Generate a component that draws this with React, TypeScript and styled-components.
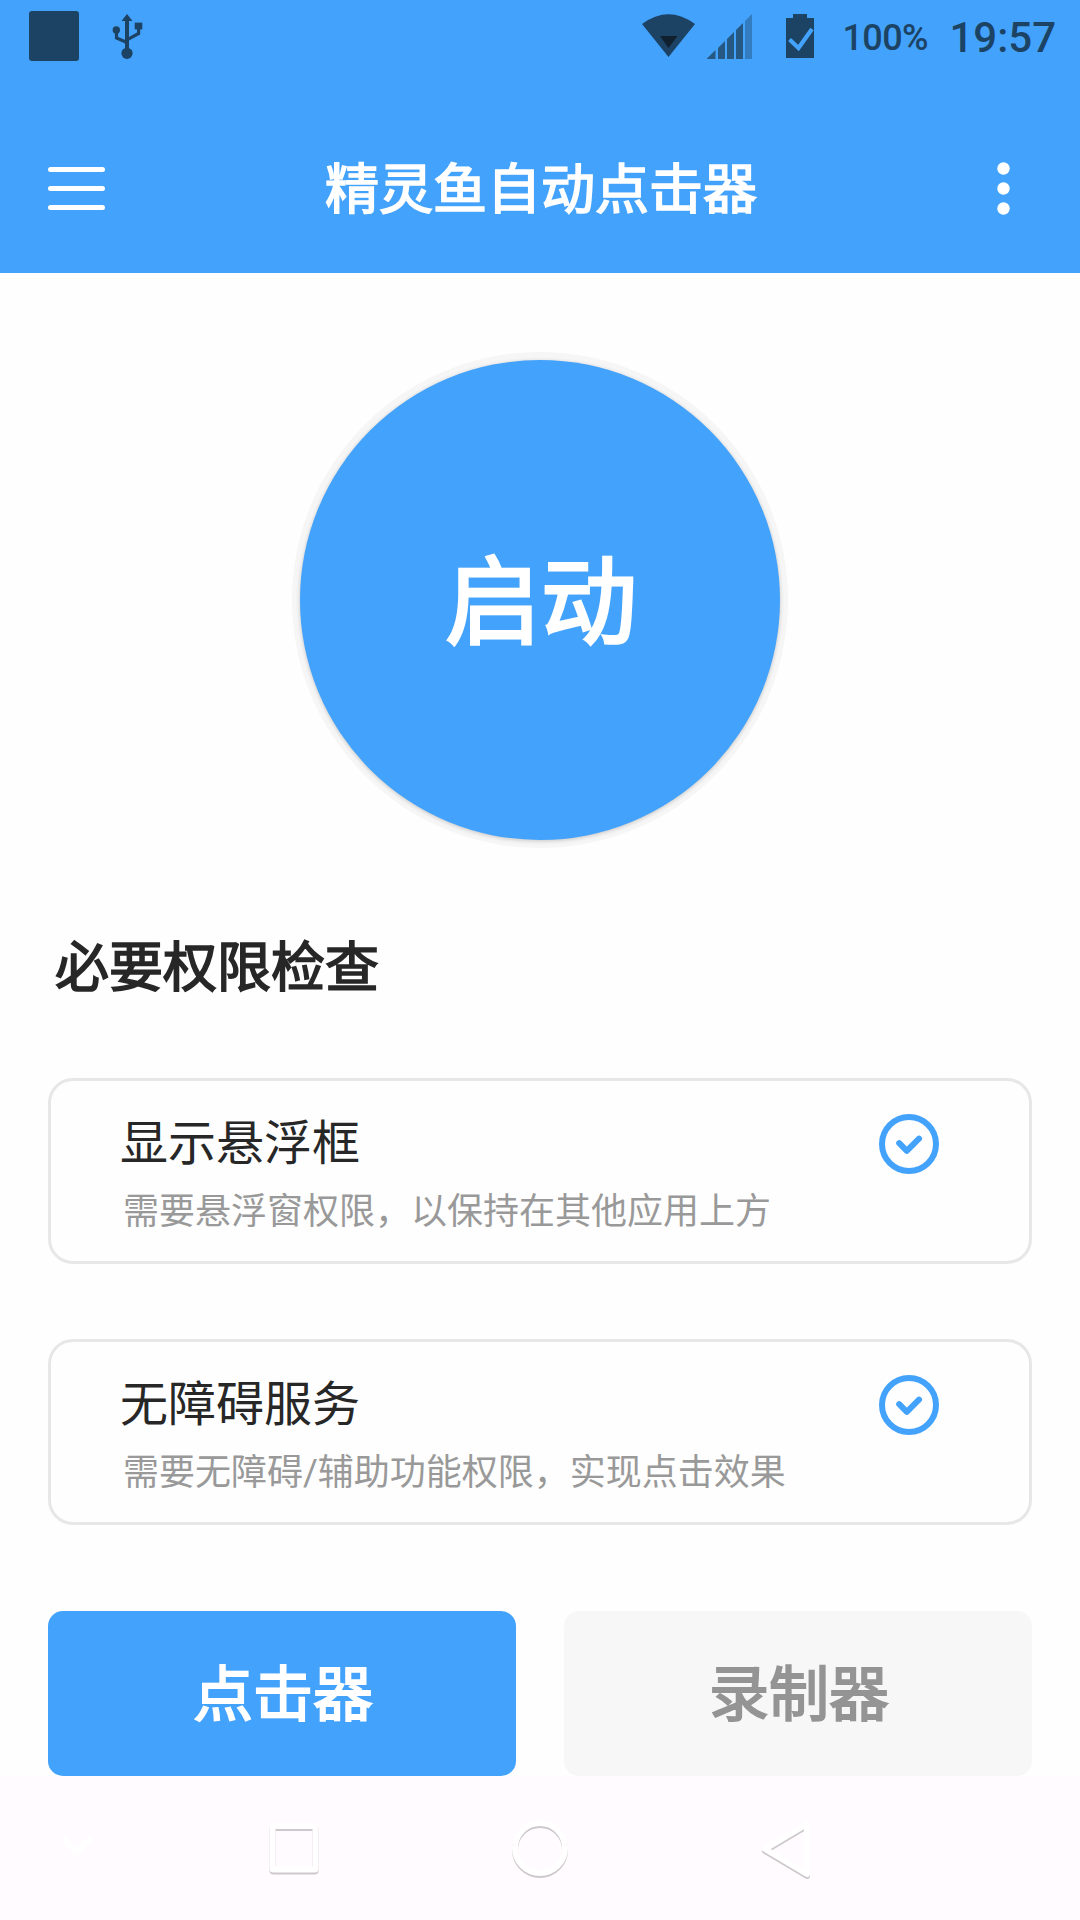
import React from 'react';
import styled, { createGlobalStyle } from 'styled-components';

const BLUE = '#43a2fb';
const STATUS = '#1c4264';
const CJK = '"Noto Sans CJK SC", "Noto Sans", sans-serif';

const GlobalStyle = createGlobalStyle`
  *, *::before, *::after { box-sizing: border-box; }
  body { margin: 0; background: #fefefe; }
`;

const Screen = styled.div`
  display: flex;
  flex-direction: column;
  width: 1080px;
  height: 1920px;
  overflow: hidden;
  background: #fefefe;
  font-family: ${CJK};
`;

/* Regular-weight glyphs thickened by an outline of 1/32 of the font size.
   The padding centres the ideographs optically inside their parent. */
const FauxBold = styled.span<{ $size: number }>`
  display: block;
  padding: 0 0 0.11em 2px;
  font-size: ${(p) => p.$size}px;
  line-height: ${(p) => p.$size * 1.25}px;
  font-weight: 400;
  white-space: nowrap;
  -webkit-text-stroke: ${(p) => p.$size / 32}px currentColor;
`;

const AppTitle = styled(FauxBold)`
  padding-bottom: 4px;
`;

const ModeLabel = styled(FauxBold)`
  padding-bottom: 8px;
`;

const StatusBar = styled.header`
  display: flex;
  align-items: center;
  justify-content: space-between;
  height: 72px;
  padding: 0 24px 0 29px;
  background: ${BLUE};
  color: ${STATUS};
  font-family: Roboto, sans-serif;
  font-weight: 500;
`;

const StatusGroup = styled.div`
  display: flex;
  align-items: center;
  height: 72px;
`;

const Notification = styled.div`
  width: 50px;
  height: 50px;
  margin-right: 26px;
  border-radius: 3px;
  background: ${STATUS};
`;

const Glyph = styled.svg`
  display: block;
  flex: none;
`;

const Signals = styled.div`
  display: flex;
  align-items: center;
  gap: 9px;
  margin-right: 34px;
`;

const BatteryLevel = styled.span`
  width: 84px;
  margin-left: 28px;
  padding-top: 4px;
  font-size: 36px;
  line-height: 72px;
  letter-spacing: -0.6px;
`;

const Clock = styled.span`
  margin-left: 23px;
  padding-top: 4px;
  font-size: 42px;
  line-height: 72px;
`;

const TitleBar = styled.div`
  display: flex;
  align-items: center;
  justify-content: space-between;
  height: 201px;
  padding: 31px 48px 0;
  background: ${BLUE};
  color: #fff;
`;

const IconButton = styled.button`
  display: flex;
  align-items: center;
  justify-content: center;
  width: 57px;
  height: 60px;
  padding: 0;
  border: 0;
  background: none;
`;

const Body = styled.main`
  display: flex;
  flex-direction: column;
  height: 1503px;
  padding: 79px 48px 0;
`;

const StartRing = styled.div`
  display: flex;
  align-self: center;
  flex: none;
  width: 496px;
  height: 496px;
  padding: 8px;
  border-radius: 50%;
  background: #f6f6f6;
`;

const StartButton = styled.button`
  display: flex;
  align-items: center;
  justify-content: center;
  width: 480px;
  height: 480px;
  padding: 0;
  border: 0;
  border-radius: 50%;
  background: ${BLUE};
  box-shadow: 0 1px 4px rgba(0, 0, 0, 0.2);
  color: #fff;
  font-family: inherit;
`;

const SectionTitle = styled.h2`
  height: 68px;
  margin: 82px 0 0;
  padding-left: 5px;
  color: #272727;
`;

const Permissions = styled.section`
  display: flex;
  flex-direction: column;
  gap: 75px;
  margin-top: 80px;
`;

const Card = styled.article`
  display: flex;
  justify-content: space-between;
  height: 186px;
  padding: 33px 90px 0 69px;
  border: 3px solid #e7e7e7;
  border-radius: 25px;
`;

const CardText = styled.div`
  margin-top: -4px;
`;

const CardTitle = styled.h3`
  margin: 0;
  color: #272727;
  font-size: 48px;
  line-height: 58px;
  font-weight: 400;
`;

const CardHint = styled.p`
  margin: 19px 0 0;
  padding-left: 3px;
  color: #999;
  font-family: Roboto, ${CJK};
  font-size: 36px;
  line-height: 50px;
  white-space: nowrap;
`;

const Modes = styled.div`
  display: flex;
  gap: 48px;
  margin-top: 86px;
`;

const ModeButton = styled.button<{ $active?: boolean }>`
  display: flex;
  flex: 1;
  align-items: center;
  justify-content: center;
  height: 165px;
  padding: 0;
  border: 0;
  border-radius: 15px;
  background: ${(p) => (p.$active ? BLUE : '#f7f7f7')};
  color: ${(p) => (p.$active ? '#fff' : '#949494')};
  font-family: inherit;
`;

const NavBar = styled.nav`
  height: 144px;
  background: #fffbff;
`;

const Raised = styled.g`
  filter: drop-shadow(0 2px 0.6px rgba(0, 0, 0, 0.2));
`;

const permissions = [
  { title: '显示悬浮框', hint: '需要悬浮窗权限，以保持在其他应用上方' },
  { title: '无障碍服务', hint: '需要无障碍/辅助功能权限，实现点击效果' },
];

const UsbIcon = () => (
  <Glyph width="44" height="72" viewBox="105 0 44 72" fill={STATUS}>
    <path d="M127 14l5.500 7h-11z" />
    <circle cx="127" cy="53.300" r="5.600" />
    <circle cx="116.300" cy="30" r="3.700" />
    <path d="M134.700 22.600h7.600v6.800h-7.600z" />
    <path d="M127 20v32" fill="none" stroke={STATUS} strokeWidth="4" />
    <path
      d="M116.500 31v7l10.500 4.500M138.600 28v5.500L127 39.800"
      fill="none"
      stroke={STATUS}
      strokeWidth="3.200"
    />
  </Glyph>
);

const WifiIcon = () => (
  <Glyph width="56" height="72" viewBox="641 0 56 72">
    <path d="M642 24Q668.500 4.500 695 24L668.500 57z" fill={STATUS} />
    <path d="M660 36h17.500L668.500 48z" fill="#10202f" />
  </Glyph>
);

const SignalIcon = () => (
  <Glyph width="46" height="72" viewBox="706 0 46 72">
    <g fill="#265884">
      <path d="M706.500 59l9-9v9z" />
      <path d="M718 48l7-7v18h-7z" />
      <path d="M727 39l7-7v27h-7z" />
      <path d="M736 30l7-7v36h-7z" />
    </g>
    <path d="M745 21l7-7v45h-7z" fill="#337cbf" />
  </Glyph>
);

const BatteryIcon = () => (
  <Glyph width="28" height="72" viewBox="786 0 28 72">
    <path d="M793 18v-4h14v4h7v40h-28V18z" fill={STATUS} />
    <path d="M789.500 39.500l9 8.500L812 29" fill="none" stroke={BLUE} strokeWidth="4.200" />
  </Glyph>
);

const CheckIcon = () => (
  <Glyph width="60" height="60" viewBox="0 0 60 60" fill="none" stroke={BLUE} strokeWidth="6">
    <circle cx="30" cy="30" r="27" />
    <path d="M20.200 29.200l7.600 7.600L40 24.700" strokeLinecap="round" strokeLinejoin="round" />
  </Glyph>
);

export default function App() {
  return (
    <>
      <GlobalStyle />
      <Screen>
        <StatusBar>
          <StatusGroup>
            <Notification />
            <UsbIcon />
          </StatusGroup>
          <StatusGroup>
            <Signals>
              <WifiIcon />
              <SignalIcon />
            </Signals>
            <BatteryIcon />
            <BatteryLevel>100%</BatteryLevel>
            <Clock>19:57</Clock>
          </StatusGroup>
        </StatusBar>
        <TitleBar>
          <IconButton aria-label="菜单">
            <Glyph width="57" height="60" viewBox="0 0 57 60" stroke="#fff" strokeWidth="5" strokeLinecap="round">
              <path d="M2.500 11.500h52M2.500 30.500h52M2.500 49.500h52" />
            </Glyph>
          </IconButton>
          <AppTitle $size={54}>精灵鱼自动点击器</AppTitle>
          <IconButton aria-label="更多">
            <Glyph width="57" height="60" viewBox="0 0 57 60" fill="#fff">
              <circle cx="28.500" cy="10.500" r="6.200" />
              <circle cx="28.500" cy="30.500" r="6.200" />
              <circle cx="28.500" cy="50.500" r="6.200" />
            </Glyph>
          </IconButton>
        </TitleBar>
        <Body>
          <StartRing>
            <StartButton>
              <FauxBold $size={96}>启动</FauxBold>
            </StartButton>
          </StartRing>
          <SectionTitle>
            <FauxBold $size={54}>必要权限检查</FauxBold>
          </SectionTitle>
          <Permissions>
            {permissions.map((item) => (
              <Card key={item.title}>
                <CardText>
                  <CardTitle>{item.title}</CardTitle>
                  <CardHint>{item.hint}</CardHint>
                </CardText>
                <CheckIcon />
              </Card>
            ))}
          </Permissions>
          <Modes>
            <ModeButton $active>
              <ModeLabel $size={60}>点击器</ModeLabel>
            </ModeButton>
            <ModeButton>
              <ModeLabel $size={60}>录制器</ModeLabel>
            </ModeButton>
          </Modes>
        </Body>
        <NavBar>
          <Glyph
            width="1080"
            height="144"
            viewBox="0 0 1080 144"
            fill="none"
            stroke="#fff"
            strokeWidth="6"
            strokeLinejoin="round"
          >
            <path d="M62.500 62l14.500 14L91.500 62" strokeWidth="6" />
            <Raised>
              <rect x="272.500" y="50" width="43" height="43.500" rx="1" />
              <circle cx="540" cy="72" r="25" />
              <path d="M765 73L807 48V98z" />
            </Raised>
          </Glyph>
        </NavBar>
      </Screen>
    </>
  );
}
